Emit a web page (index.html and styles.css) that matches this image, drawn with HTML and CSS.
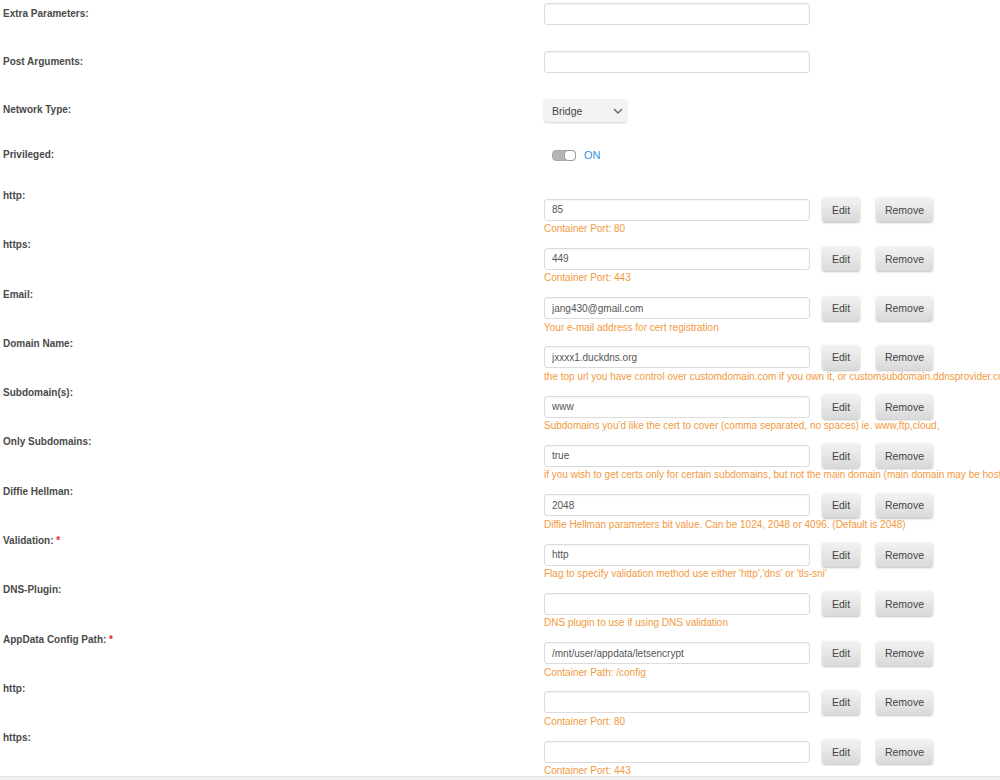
FILE: index.html
```
<!DOCTYPE html>
<html lang="en">
<head>
  <meta charset="UTF-8" />
  <title>Update Container</title>
  <link rel="stylesheet" href="styles.css">
</head>
<body>

  <div class="form">

    <!-- plain fields -->
    <div class="row simple">
      <label class="name">Extra Parameters:</label>
      <div class="value"><input class="field" type="text" value=""></div>
    </div>

    <div class="row simple">
      <label class="name">Post Arguments:</label>
      <div class="value"><input class="field" type="text" value=""></div>
    </div>

    <div class="row simple">
      <label class="name">Network Type:</label>
      <div class="value">
        <div class="select">
          <span>Bridge</span>
          <svg width="10" height="6" viewBox="0 0 10 6"><path d="M1 1 L5 5 L9 1" fill="none" stroke="#666" stroke-width="1.4"/></svg>
        </div>
      </div>
    </div>

    <div class="row toggle-row">
      <label class="name">Privileged:</label>
      <div class="value">
        <span class="switch"><span class="knob"></span></span>
        <span class="switch-text">ON</span>
      </div>
    </div>

    <!-- config entries -->
    <div class="row entry">
      <label class="name">http:</label>
      <div class="value">
        <div class="line"><input class="field" type="text" value="85"><button class="btn">Edit</button><button class="btn">Remove</button></div>
        <div class="hint">Container Port: 80</div>
      </div>
    </div>

    <div class="row entry">
      <label class="name">https:</label>
      <div class="value">
        <div class="line"><input class="field" type="text" value="449"><button class="btn">Edit</button><button class="btn">Remove</button></div>
        <div class="hint">Container Port: 443</div>
      </div>
    </div>

    <div class="row entry">
      <label class="name">Email:</label>
      <div class="value">
        <div class="line"><input class="field" type="text" value="jang430@gmail.com"><button class="btn">Edit</button><button class="btn">Remove</button></div>
        <div class="hint">Your e-mail address for cert registration</div>
      </div>
    </div>

    <div class="row entry">
      <label class="name">Domain Name:</label>
      <div class="value">
        <div class="line"><input class="field" type="text" value="jxxxx1.duckdns.org"><button class="btn">Edit</button><button class="btn">Remove</button></div>
        <div class="hint">the top url you have control over customdomain.com if you own it, or customsubdomain.ddnsprovider.com if dynamic dns</div>
      </div>
    </div>

    <div class="row entry">
      <label class="name">Subdomain(s):</label>
      <div class="value">
        <div class="line"><input class="field" type="text" value="www"><button class="btn">Edit</button><button class="btn">Remove</button></div>
        <div class="hint">Subdomains you'd like the cert to cover (comma separated, no spaces) ie. www,ftp,cloud,</div>
      </div>
    </div>

    <div class="row entry">
      <label class="name">Only Subdomains:</label>
      <div class="value">
        <div class="line"><input class="field" type="text" value="true"><button class="btn">Edit</button><button class="btn">Remove</button></div>
        <div class="hint">if you wish to get certs only for certain subdomains, but not the main domain (main domain may be hosted on another machine)</div>
      </div>
    </div>

    <div class="row entry">
      <label class="name">Diffie Hellman:</label>
      <div class="value">
        <div class="line"><input class="field" type="text" value="2048"><button class="btn">Edit</button><button class="btn">Remove</button></div>
        <div class="hint">Diffie Hellman parameters bit value. Can be 1024, 2048 or 4096. (Default is 2048)</div>
      </div>
    </div>

    <div class="row entry">
      <label class="name">Validation: <span class="req">*</span></label>
      <div class="value">
        <div class="line"><input class="field" type="text" value="http"><button class="btn">Edit</button><button class="btn">Remove</button></div>
        <div class="hint">Flag to specify validation method use either 'http','dns' or 'tls-sni'</div>
      </div>
    </div>

    <div class="row entry">
      <label class="name">DNS-Plugin:</label>
      <div class="value">
        <div class="line"><input class="field" type="text" value=""><button class="btn">Edit</button><button class="btn">Remove</button></div>
        <div class="hint">DNS plugin to use if using DNS validation</div>
      </div>
    </div>

    <div class="row entry">
      <label class="name">AppData Config Path: <span class="req">*</span></label>
      <div class="value">
        <div class="line"><input class="field" type="text" value="/mnt/user/appdata/letsencrypt"><button class="btn">Edit</button><button class="btn">Remove</button></div>
        <div class="hint">Container Path: /config</div>
      </div>
    </div>

    <div class="row entry">
      <label class="name">http:</label>
      <div class="value">
        <div class="line"><input class="field" type="text" value=""><button class="btn">Edit</button><button class="btn">Remove</button></div>
        <div class="hint">Container Port: 80</div>
      </div>
    </div>

    <div class="row entry">
      <label class="name">https:</label>
      <div class="value">
        <div class="line"><input class="field" type="text" value=""><button class="btn">Edit</button><button class="btn">Remove</button></div>
        <div class="hint">Container Port: 443</div>
      </div>
    </div>

  </div>

  <div class="footer"></div>

</body>
</html>
```

FILE: styles.css
```
body {
  margin: 0;
  padding: 3px 0 0 0;
  font-family: "Liberation Sans", Arial, sans-serif;
  font-size: 10px;
  color: #4a4a4a;
  background: #fff;
  overflow: hidden;
}

.row {
  display: flex;
}

.name {
  width: 541px;
  flex: none;
  padding-left: 3px;
  font-weight: bold;
  color: #4a4a4a;
  line-height: 14px;
}

.req {
  color: #e22;
}

.value {
  flex: 1;
  min-width: 0;
}

/* top part */
.simple {
  align-items: center;
  height: 22px;
  margin-bottom: 26px;
}

.toggle-row {
  align-items: center;
  height: 14px;
  margin-top: 27px;
  margin-bottom: 24px;
}

.toggle-row .value {
  display: flex;
  align-items: center;
  padding-left: 8px;
}

.switch {
  display: inline-block;
  position: relative;
  width: 22px;
  height: 9px;
  background: #b5b5b5;
  border: 1px solid #a8a8a8;
  border-radius: 4px;
}

.knob {
  position: absolute;
  right: -1px;
  top: -1px;
  width: 10px;
  height: 9px;
  background: #fff;
  border: 1px solid #9d9d9d;
  border-radius: 4px;
}

.switch-text {
  margin-left: 8px;
  color: #3b8fd6;
  font-size: 11px;
}

.select {
  width: 83px;
  height: 23px;
  box-sizing: border-box;
  display: flex;
  align-items: center;
  justify-content: space-between;
  padding: 0 4px 0 8px;
  background: #f3f3f3;
  border-radius: 3px;
  box-shadow: 0 1px 2px rgba(0,0,0,0.18);
  color: #444;
  font-size: 10.5px;
  margin-top: 1px;
}

/* entries with edit / remove */
.entry {
  height: 49.3px;
}

.entry .name {
  padding-top: 3px;
}

.entry .value {
  padding-top: 11px;
}

.line {
  display: flex;
  align-items: center;
}

.field {
  width: 266px;
  height: 22px;
  box-sizing: border-box;
  margin: 0;
  padding: 0 7px;
  border: 1px solid #dcdcdc;
  border-radius: 3px;
  box-shadow: inset 0 1px 2px rgba(0,0,0,0.05);
  font-family: "Liberation Sans", Arial, sans-serif;
  font-size: 10px;
  color: #555;
  background: #fff;
  outline: none;
}

.btn {
  width: 38px;
  height: 25px;
  margin: 0 0 0 12px;
  padding: 0;
  border: none;
  border-radius: 3px;
  background: linear-gradient(#f3f3f3, #d9d9d9);
  box-shadow: 0 1px 2px rgba(0,0,0,0.25);
  font-family: "Liberation Sans", Arial, sans-serif;
  font-size: 10.5px;
  color: #444;
}

.btn + .btn {
  width: 57px;
  margin-left: 16px;
}

.hint {
  line-height: 12px;
  margin-top: 1px;
  color: #f2993d;
  white-space: nowrap;
}

.footer {
  position: fixed;
  left: 0;
  right: 0;
  bottom: 0;
  height: 3px;
  background: #f0f0f0;
  border-top: 1px solid #e4e4e4;
}
```
